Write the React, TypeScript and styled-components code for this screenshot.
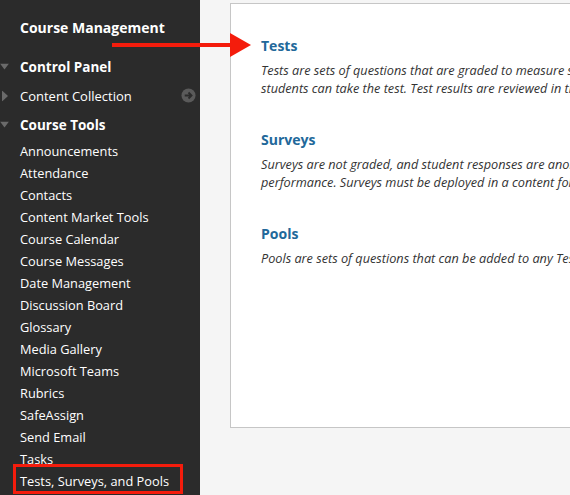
import { FC } from 'react';
import styled, { createGlobalStyle } from 'styled-components';

const GlobalStyle = createGlobalStyle`
  html, body {
    margin: 0;
    padding: 0;
    overflow: hidden;
  }

  body {
    font-family: 'Open Sans', 'Noto Sans', sans-serif;
  }
`;

interface ItemProps {
  $highlight?: boolean;
}

interface SectionProps {
  $bold?: boolean;
}

const Page = styled.div`
  position: relative;
  display: flex;
  flex-direction: row;
  width: 570px;
  height: 495px;
  overflow: hidden;
`;

const Sidebar = styled.nav`
  flex: 0 0 200px;
  display: flex;
  flex-direction: column;
  padding-top: 17px;
  background: #2b2b2b;
  color: #fff;
`;

const MenuTitle = styled.div`
  height: 22px;
  line-height: 22px;
  margin-bottom: 13px;
  padding-left: 20px;

  font-size: 14px;
  font-weight: 700;
`;

const SectionRow = styled.div<SectionProps>`
  position: relative;
  display: flex;
  align-items: center;
  height: 29px;
  padding-left: 20px;

  font-size: ${(props) => (props.$bold ? '13.5px' : '13px')};
  font-weight: ${(props) => (props.$bold ? 700 : 400)};
`;

const Toggle = styled.span`
  position: absolute;
  left: 0;
  top: 50%;
  transform: translateY(-50%);
  display: flex;
`;

const GoIcon = styled.span`
  margin-left: auto;
  margin-right: 4px;
  display: flex;
`;

const ToolList = styled.ul`
  margin: 1px 0 0;
  padding: 0;
  list-style: none;
`;

const ToolItem = styled.li<ItemProps>`
  position: relative;
  height: 22px;
  line-height: 22px;
  padding-left: 20px;

  font-size: 12.8px;
  color: #fff;

  &::after {
    content: '';
    display: ${(props) => (props.$highlight ? 'block' : 'none')};
    position: absolute;
    left: 13px;
    top: -6px;
    width: 164px;
    height: 24px;
    border: 3px solid #f41c0c;
  }
`;

const Main = styled.main`
  flex: 1;
  padding: 3px 0 0 30px;
  background: #f5f5f5;
`;

const Card = styled.section`
  height: 391px;
  padding: 32px 0 0 30px;
  background: #fff;
  border: 1px solid #c6c6c6;
  border-right: none;
  white-space: nowrap;
`;

const Block = styled.div`
  & + & {
    margin-top: 33px;
  }
`;

const Heading = styled.h3`
  margin: 0 0 5px;
  line-height: 20px;

  font-size: 14px;
  font-weight: 700;
  color: #22689a;
`;

const Description = styled.p`
  margin: 0;
  line-height: 18px;

  font-size: 12.7px;
  font-style: italic;
  color: #333;
`;

const Callout = styled.svg`
  position: absolute;
  left: 112px;
  top: 33px;
`;

const tools = [
  'Announcements',
  'Attendance',
  'Contacts',
  'Content Market Tools',
  'Course Calendar',
  'Course Messages',
  'Date Management',
  'Discussion Board',
  'Glossary',
  'Media Gallery',
  'Microsoft Teams',
  'Rubrics',
  'SafeAssign',
  'Send Email',
  'Tasks',
  'Tests, Surveys, and Pools',
];

const blocks = [
  {
    title: 'Tests',
    lines: [
      'Tests are sets of questions that are graded to measure student performance. Tests must be deployed in a content folder before',
      'students can take the test. Test results are reviewed in the Grade Center.',
    ],
  },
  {
    title: 'Surveys',
    lines: [
      'Surveys are not graded, and student responses are anonymous. Surveys are used to gather information that is not used to evaluate',
      'performance. Surveys must be deployed in a content folder before students can take the survey.',
    ],
  },
  {
    title: 'Pools',
    lines: ['Pools are sets of questions that can be added to any Test or Survey.'],
  },
];

const DownTriangle = () => (
  <svg width="9" height="7" viewBox="0 0 9 7">
    <polygon points="0,0 9,0 4.5,6" fill="#6a6a6a" />
  </svg>
);

const RightTriangle = () => (
  <svg width="10" height="11" viewBox="0 0 10 11" style={{ marginLeft: 2 }}>
    <polygon points="0,0 6,5.5 0,11" fill="#6a6a6a" />
  </svg>
);

const App: FC = () => {
  return (
    <>
      <GlobalStyle />
      <Page>
        <Sidebar>
          <MenuTitle>Course Management</MenuTitle>
          <SectionRow $bold>
            <Toggle>
              <DownTriangle />
            </Toggle>
            Control Panel
          </SectionRow>
          <SectionRow>
            <Toggle>
              <RightTriangle />
            </Toggle>
            Content Collection
            <GoIcon>
              <svg width="15" height="15" viewBox="0 0 16 16">
                <circle cx="8" cy="8" r="7.5" fill="#5a5a5a" />
                <path
                  d="M4 8h7M8 4.8L11.2 8 8 11.2"
                  stroke="#2b2b2b"
                  strokeWidth="2"
                  fill="none"
                />
              </svg>
            </GoIcon>
          </SectionRow>
          <SectionRow $bold>
            <Toggle>
              <DownTriangle />
            </Toggle>
            Course Tools
          </SectionRow>
          <ToolList>
            {tools.map((tool, i) => (
              <ToolItem key={tool} $highlight={i === tools.length - 1}>
                {tool}
              </ToolItem>
            ))}
          </ToolList>
        </Sidebar>
        <Main>
          <Card>
            {blocks.map((block) => (
              <Block key={block.title}>
                <Heading>{block.title}</Heading>
                {block.lines.map((line) => (
                  <Description key={line}>{line}</Description>
                ))}
              </Block>
            ))}
          </Card>
        </Main>
        <Callout width="140" height="25" viewBox="0 0 140 25">
          <rect x="0" y="10" width="120" height="4" fill="#f41c0c" />
          <polygon points="118,0 139,12 118,24" fill="#f41c0c" />
        </Callout>
      </Page>
    </>
  );
};

export default App;
